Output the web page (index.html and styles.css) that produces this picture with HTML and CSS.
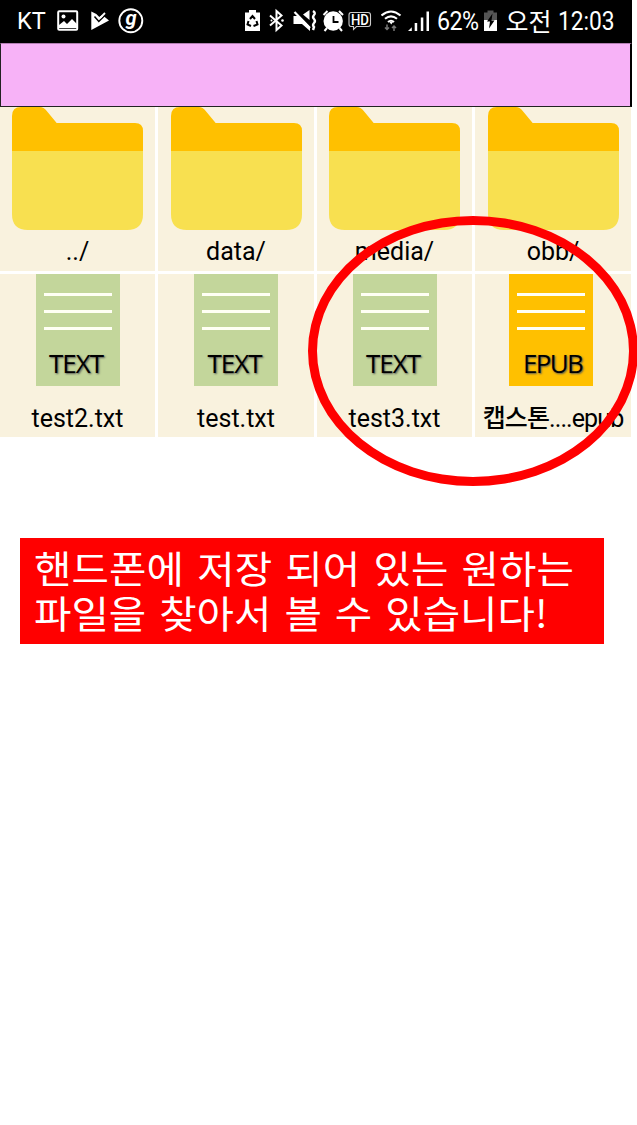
FILE: index.html
```html
<!DOCTYPE html>
<html lang="ko">
<head>
<meta charset="utf-8">
<title>파일 목록</title>
<link rel="stylesheet" href="styles.css">
</head>
<body>
<main class="screen">
  <header class="status">
    <div class="group left">
      <span class="carrier">KT</span>
      <svg class="photo" width="22" height="43" viewBox="57 0 22 43"><rect x="58.2" y="11.2" width="19" height="18.6" rx="1" fill="none" stroke="#fff" stroke-width="2"/><circle cx="63.5" cy="16.5" r="2" fill="#fff"/><path d="M59 28V25l5-4 3 3 5-5 5 5v4z" fill="#fff"/></svg>
      <svg class="play" width="19" height="43" viewBox="91 0 19 43"><path d="M91.300 11.500l5 2.500 3 3 3-2 6.700 5.500L91.300 30z" fill="#fff"/><path d="M94.500 16.500l4.300 5 8-8" fill="none" stroke="#000" stroke-width="1.500"/><path d="M100 18l5-5" stroke="#fff" stroke-width="1.800"/></svg>
      <svg class="gmark" width="26" height="43" viewBox="118 0 26 43"><circle cx="130.800" cy="20.700" r="11.500" fill="none" stroke="#fff" stroke-width="1.900"/><text x="125.500" y="24.500" font-family="Roboto, sans-serif" font-size="20" font-weight="700" font-style="italic" fill="#fff">g</text></svg>
    </div>
    <div class="group right">
      <svg class="recycle" width="16" height="43" viewBox="244 0 16 43"><path d="M244 12.500h4v-2.500h7v2.500h4V31h-15z" fill="#fff"/><path d="M249 19l2.500-3 2.500 3M247.500 21l-1 3.500 3.500 1.500M255.500 21l1 3.500-4 1.500" fill="none" stroke="#000" stroke-width="2"/></svg>
      <svg class="bt" width="15" height="43" viewBox="268.500 0 15 43"><path d="M269.500 15.500L281 25.500l-5 4.500V11l5 4.500-11.500 10" fill="none" stroke="#fff" stroke-width="2"/><circle cx="282" cy="20.500" r="1.300" fill="#fff"/><circle cx="271" cy="20.500" r="1" fill="#fff"/></svg>
      <svg class="mute" width="24" height="43" viewBox="292 0 24 43"><path d="M292.500 16h5.500l11 11v4l-8-7h-8.500zM302 14.500l6.500-4.500v10z" fill="#fff"/><path d="M293.500 12L309 28" stroke="#fff" stroke-width="2.200"/><path d="M312 11q3 2 1 4t0 4 0 4 0 4l-1 3" fill="none" stroke="#fff" stroke-width="2.400"/></svg>
      <svg class="alarm" width="22" height="43" viewBox="321 0 22 43"><circle cx="332.200" cy="21" r="9.700" fill="#fff"/><path d="M322.500 15l4-4M342 15l-4-4M326 28l-2.500 3M338.500 28l2.500 3" stroke="#fff" stroke-width="2"/><path d="M332.500 16v6h5" fill="none" stroke="#000" stroke-width="1.800"/></svg>
      <svg class="hd" width="24" height="43" viewBox="347 0 24 43"><path d="M350 12.500h17q2.500 0 2.500 2.500v9q0 2.500-2.500 2.500h-11.500l-3 3v-3H350q-2 0-2-2.500v-9q0-2.500 2-2.500z" fill="none" stroke="#ccc" stroke-width="1.100"/><text x="350" y="24.800" font-family="Roboto, sans-serif" font-size="14" font-weight="500" textLength="18" lengthAdjust="spacingAndGlyphs" fill="#fff">HD</text></svg>
      <svg class="wifi" width="21" height="43" viewBox="380 0 21 43"><path d="M380.500 15.500q9.500-8 19 0M384 18.800q6-5 12 0M387 22q3-2.500 6 0" fill="none" stroke="#fff" stroke-width="2.100"/><path d="M388.500 22h3.500l-1.800 2.500z" fill="#fff"/><path d="M386 24.500v5m-2-2l2 2 2-2M393 31v-5m-2 2l2-2 2 2" fill="none" stroke="#777" stroke-width="1.500"/></svg>
      <svg class="signal" width="22" height="43" viewBox="407 0 22 43"><path d="M407 31l3.800-3.800V31zM413.700 23h2.500v8h-2.500zM419.800 17.500h2.500V31h-2.500zM425.500 11.500h2.500V31h-2.500z" fill="#fff"/></svg>
      <span class="percent">62%</span>
      <svg class="charge" width="14" height="43" viewBox="483 0 14 43"><path d="M483 12.500h3.500v-2h6v2h3.500V31h-13z" fill="#555"/><path d="M483 20h13v11h-13z" fill="#fff"/><path d="M491.500 13.500l-5.500 8h3l-1 7 5.500-8h-3z" fill="#000"/></svg>
      <span class="ampm">오전</span>
      <span class="clock">12:03</span>
    </div>
  </header>
  <div class="pathbar"></div>
  <section class="files">
    <article class="cell"><svg class="folder" viewBox="0 0 132 124" preserveAspectRatio="none"><path d="M0 45V9Q0 0 9 0h19q4 0 7 4l10 12h79q8 0 8 8v21z" fill="#ffc000"/><path d="M0 44h132v63q0 16-16 16H16Q0 123 0 107z" fill="#f8e050"/></svg><span class="name">../</span></article>
    <article class="cell"><svg class="folder" viewBox="0 0 132 124" preserveAspectRatio="none"><path d="M0 45V9Q0 0 9 0h19q4 0 7 4l10 12h79q8 0 8 8v21z" fill="#ffc000"/><path d="M0 44h132v63q0 16-16 16H16Q0 123 0 107z" fill="#f8e050"/></svg><span class="name">data/</span></article>
    <article class="cell"><svg class="folder" viewBox="0 0 132 124" preserveAspectRatio="none"><path d="M0 45V9Q0 0 9 0h19q4 0 7 4l10 12h79q8 0 8 8v21z" fill="#ffc000"/><path d="M0 44h132v63q0 16-16 16H16Q0 123 0 107z" fill="#f8e050"/></svg><span class="name">media/</span></article>
    <article class="cell"><svg class="folder" viewBox="0 0 132 124" preserveAspectRatio="none"><path d="M0 45V9Q0 0 9 0h19q4 0 7 4l10 12h79q8 0 8 8v21z" fill="#ffc000"/><path d="M0 44h132v63q0 16-16 16H16Q0 123 0 107z" fill="#f8e050"/></svg><span class="name">obb/</span></article>
    <article class="cell file"><div class="doc"><i></i><i></i><i></i><b>TEXT</b></div><span class="name">test2.txt</span></article>
    <article class="cell file"><div class="doc"><i></i><i></i><i></i><b>TEXT</b></div><span class="name">test.txt</span></article>
    <article class="cell file"><div class="doc"><i></i><i></i><i></i><b>TEXT</b></div><span class="name">test3.txt</span></article>
    <article class="cell file shifted"><div class="doc epub"><i></i><i></i><i></i><b>EPUB</b></div><span class="name book"><span class="ko">캡스톤</span>....epub</span></article>
  </section>
  <p class="caption"><span class="line1">핸드폰에 저장 되어 있는 원하는</span><span class="line2">파일을 찾아서 볼 수 있습니다!</span></p>
  <div class="highlight"></div>
</main>
</body>
</html>
```
FILE: styles.css
```css
* { box-sizing: border-box; }
body { margin: 0; background: #fff; }
.screen { position: relative; width: 637px; height: 1125px; overflow: hidden; font-family: Roboto, "Noto Sans CJK KR", sans-serif; }
.status { display: flex; justify-content: space-between; width: 632px; height: 43px; background: #000; color: #fff; padding: 0 10.500px 0 17px; }
.group { display: flex; height: 43px; }
.group svg { display: block; flex: none; }
.group span { flex: none; white-space: nowrap; line-height: 43px; }
.carrier { width: 40px; font-size: 23.500px; }
.play { margin-left: 12px; }
.gmark { margin-left: 8px; }
.bt { margin-left: 8.500px; }
.mute { margin-left: 8.500px; }
.alarm { margin-left: 5px; }
.hd { margin-left: 4px; }
.wifi { margin-left: 9px; }
.signal { margin-left: 6px; }
.percent { width: 47px; margin-left: 7px; font-size: 25px; letter-spacing: -0.600px; transform: scaleX(.93); transform-origin: left; }
.charge { margin-left: 0; }
.ampm { width: 55px; padding-left: 8px; font-family: "Noto Sans CJK KR", sans-serif; font-size: 25px; }
.group .ampm { line-height: 41px; }
.clock { width: 64px; margin-left: 5px; font-size: 25px; transform: scaleX(.91); transform-origin: left; }
.pathbar { width: 632px; height: 64px; background: #f7b2f7; border: 1px solid #222; border-right: 2px solid #000; border-top-color: #b37fb3; }
.files { display: grid; width: 631px; grid-template-columns: 155px 156px 155px 156px; grid-template-rows: 164px 163px; gap: 3px; }
.cell { position: relative; display: flex; flex-direction: column; align-items: center; background: #f9f2de; }
.folder { display: block; width: 131px; height: 124px; }
.name { position: absolute; left: 0; width: 100%; bottom: 4px; text-align: center; white-space: nowrap; font-size: 25px; line-height: 30px; color: #000; }
.file .name { bottom: 3px; }
.name.book { letter-spacing: -0.900px; }
.shifted { padding-right: 5px; }
.doc { display: flex; flex-direction: column; align-items: center; width: 84px; height: 112px; padding-top: 19px; background: #c3d69b; }
.doc i { flex: none; width: 68px; height: 3px; margin-bottom: 14px; background: #fffff5; }
.doc b { margin: 2px 3px 0 0; font: 400 26px/34px "Open Sans", sans-serif; letter-spacing: -1px; color: #000; text-shadow: 1px 1px 2px #555; }
.doc.epub { background: #ffc000; }
.doc.epub b { margin-left: 4px; margin-right: 0; letter-spacing: -1.700px; }
.files { column-gap: 3px; }
.ko { font-family: "Noto Sans CJK KR", sans-serif; font-weight: 500; }
.caption { display: flex; flex-direction: column; align-items: flex-start; width: 584px; height: 106px; margin: 101px 0 0 20px; padding: 7px 14px; background: #f00; color: #fff; font-family: "Noto Sans CJK KR", sans-serif; font-size: 38px; line-height: 44.500px; white-space: nowrap; }
.caption span { transform: scaleX(1.07); transform-origin: left; }
.line1 { letter-spacing: 0.100px; word-spacing: 1.500px; }
.line2 { word-spacing: 1.500px; }
.highlight { position: absolute; left: 308px; top: 216px; width: 330px; height: 270px; border: 9px solid #f00; border-radius: 50%; }
```
